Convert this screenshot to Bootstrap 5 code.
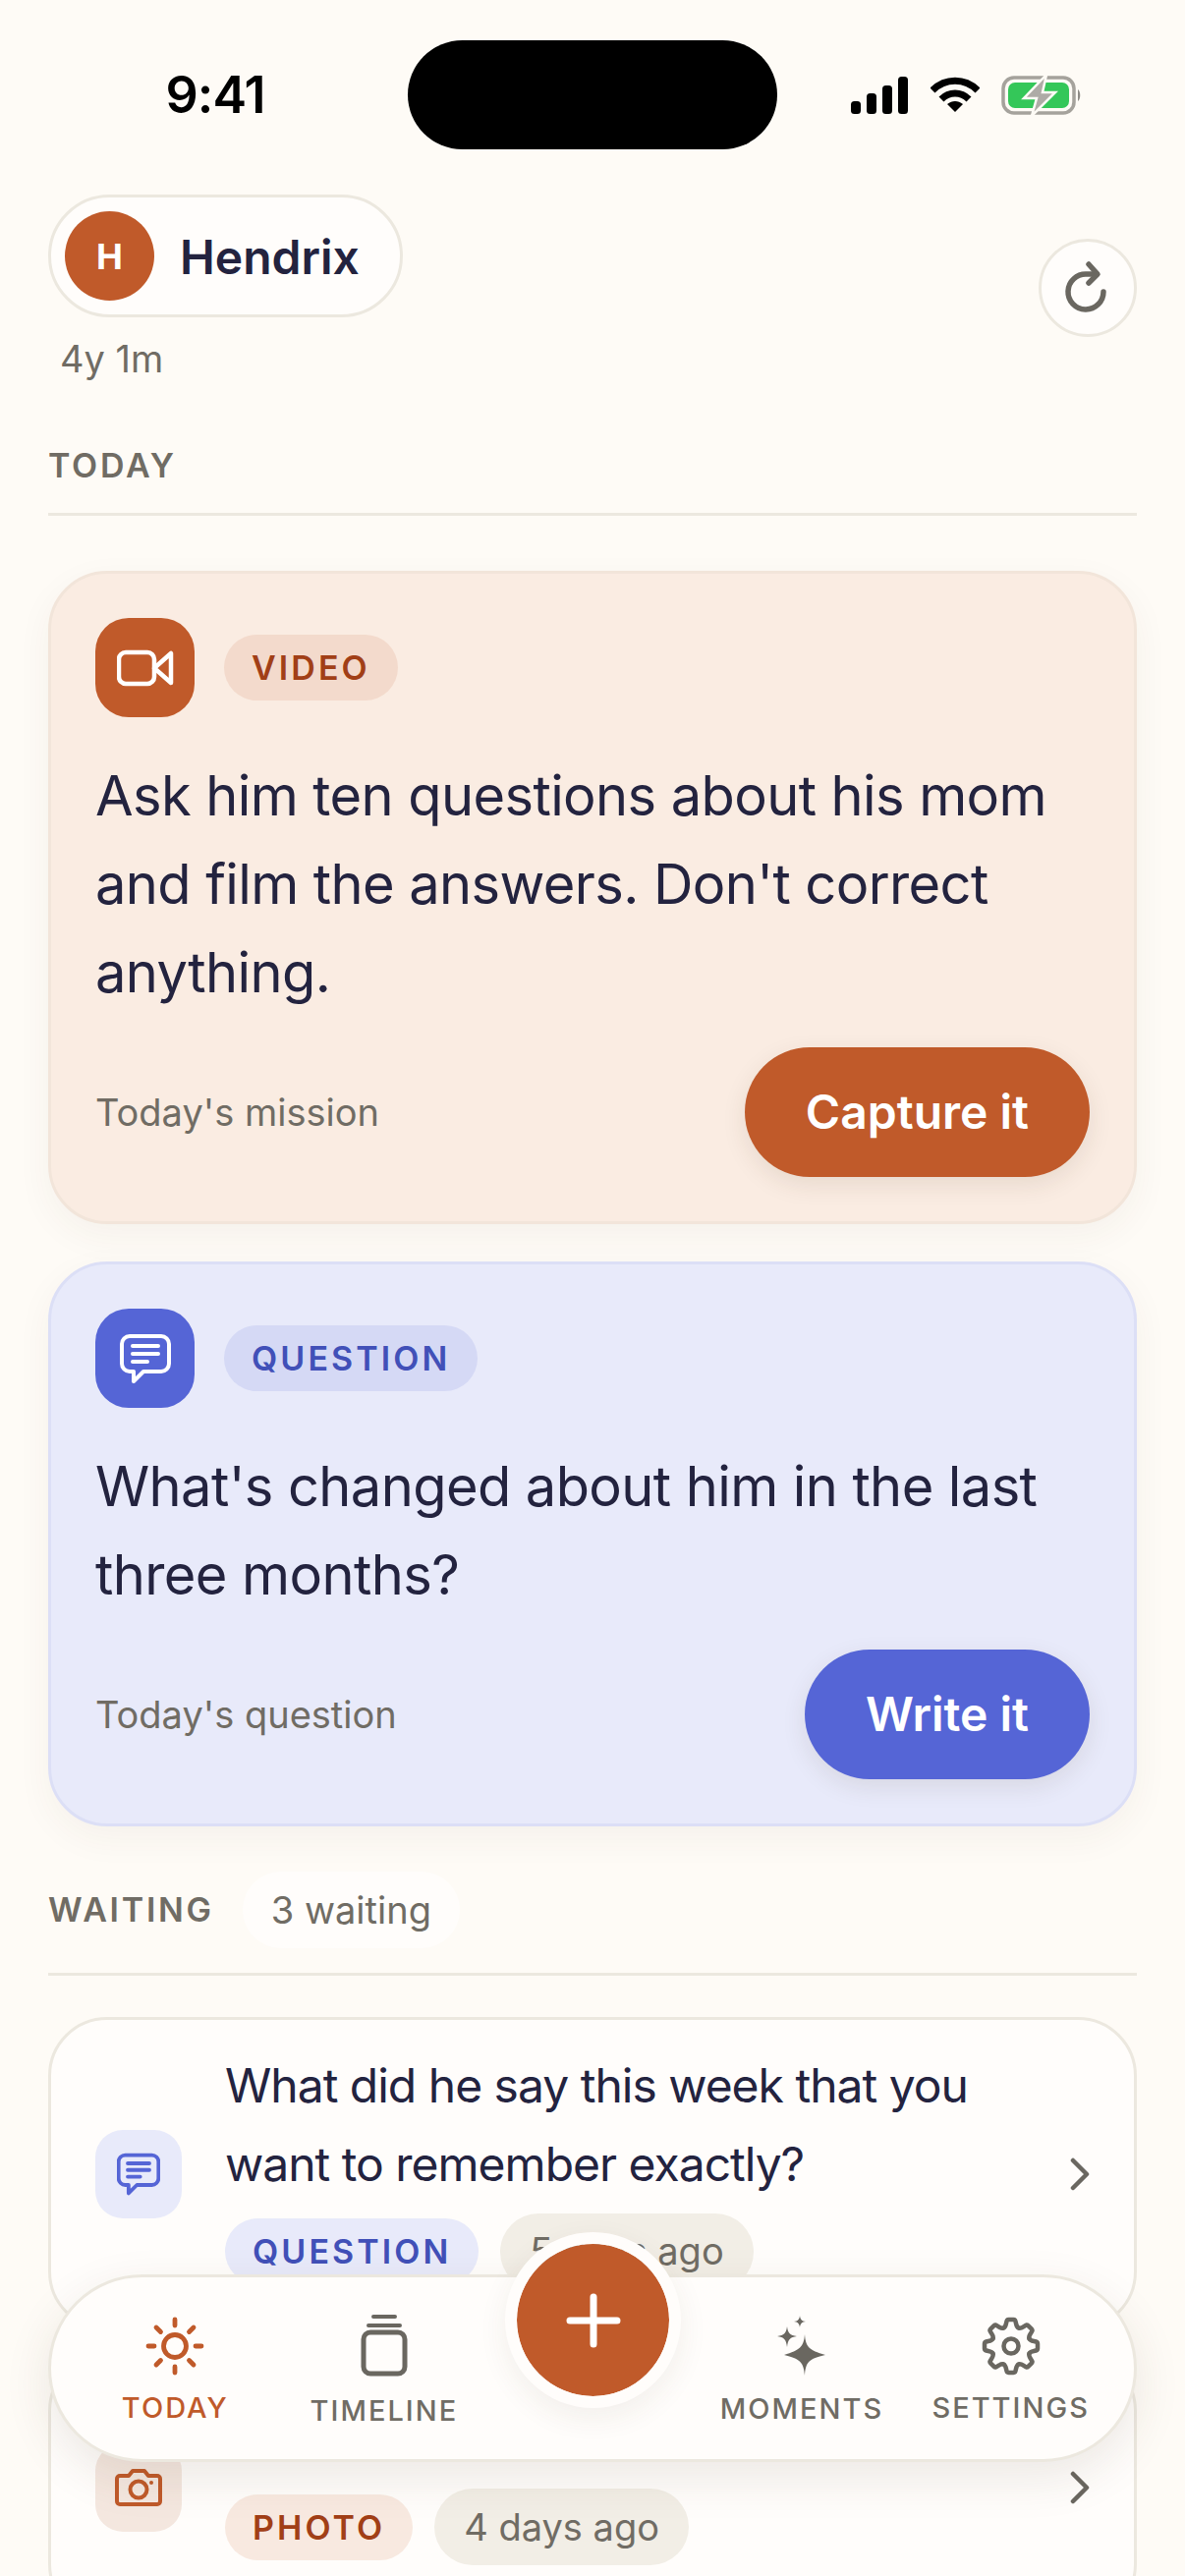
<!DOCTYPE html>
<html lang="en">
<head>
    <meta charset="UTF-8">
    <title>Hendrix - Today</title>
    <link href="https://cdn.jsdelivr.net/npm/bootstrap@5.3.0/dist/css/bootstrap.min.css" rel="stylesheet">
    <style>
        html, body {
            margin: 0;
            height: 2622px;
            overflow: hidden;
            background: #fefbf6;
        }

        body {
            font-family: Inter, "Liberation Sans", sans-serif;
            color: #23233f;
        }

        .phone {
            position: relative;
            width: 1206px;
            height: 2622px;
            overflow: hidden;
        }

        /* Status bar */
        .status-bar {
            height: 111px;
            margin-top: 41px;
        }

        .status-time {
            width: 415px;
            padding-left: 23px;
            text-align: center;
            font-size: 52px;
            font-weight: 600;
            color: #000;
            line-height: 1;
            letter-spacing: -1px;
        }

        .status-island {
            width: 376px;
            height: 111px;
            background: #000;
            border-radius: 56px;
        }

        .status-icons {
            gap: 22px;
            margin-left: 74px;
        }

        .page-body {
            padding: 0 49px;
        }

        /* Header */
        .top-row {
            margin-top: 46px;
        }

        .child-chip {
            height: 125px;
            width: 361px;
            padding-left: 14px;
            gap: 26px;
            background: #fffdfb;
            border: 3px solid #ece8df;
            font-size: 48px;
            font-weight: 600;
            line-height: 1;
        }

        .child-name {
            padding-top: 3px;
        }

        .child-avatar {
            width: 91px;
            height: 91px;
            background: #c05a2a;
            color: #fff;
            font-size: 36px;
            font-weight: 700;
        }

        .child-age {
            font-size: 38px;
            line-height: 44px;
            color: #706c64;
            margin: 20px 0 0 12px;
        }

        .refresh-btn {
            width: 100px;
            height: 100px;
            padding: 0;
            margin-top: 45px;
            background: #fffdfb;
            border: 3px solid #ece8df;
        }

        /* Section headings */
        .section-head {
            gap: 29px;
            border-bottom: 3px solid #ece8df;
            font-size: 34px;
            font-weight: 600;
            letter-spacing: 0.08em;
            color: #706c64;
            padding-bottom: 28px;
        }

        .section-today {
            margin-top: 67px;
            line-height: 40px;
        }

        .section-waiting {
            margin-top: 46px;
            line-height: 78px;
            padding-bottom: 25px;
        }

        .waiting-pill {
            background: #fffdfb;
            padding: 0 29px;
            height: 78px;
            font-size: 38px;
            font-weight: 400;
            letter-spacing: 0;
        }

        /* Big prompt cards */
        .prompt-card {
            border-width: 3px;
            border-style: solid;
            border-radius: 60px;
            padding: 45px;
            box-shadow: 0 12px 36px rgba(70, 50, 30, 0.05);
        }

        .prompt-video {
            background: #faece2;
            border-color: #f2e5da;
            margin-top: 56px;
        }

        .prompt-question {
            background: #e8eafa;
            border-color: #dcdff6;
            margin-top: 38px;
        }

        .prompt-head {
            gap: 30px;
        }

        .kind-tile {
            width: 101px;
            height: 101px;
            border-radius: 34px;
        }

        .tile-video { background: #c05a2a; }
        .tile-question { background: #5565d6; }

        .kind-tag {
            height: 67px;
            padding: 0 28px;
            font-size: 34px;
            font-weight: 600;
            letter-spacing: 0.09em;
        }

        .tag-video { background: #f3dacc; color: #a13f17; }
        .tag-question { background: #d5d9f5; color: #4150b8; }
        .tag-question-soft { background: #e8eafa; color: #4150b8; }
        .tag-photo { background: #f8e9e0; color: #a13f17; }
        .tag-time {
            background: #f2eee6;
            color: #706c64;
            font-weight: 400;
            letter-spacing: 0;
            font-size: 38px;
            height: 78px;
            padding: 0 30px;
        }

        .prompt-text {
            font-size: 56px;
            line-height: 90px;
            letter-spacing: -0.6px;
            margin: 35px 0 31px;
        }

        .prompt-note {
            font-size: 38px;
            color: #706c64;
        }

        .action-btn {
            height: 132px;
            padding: 0 62px;
            border: 0;
            font-size: 48px;
            font-weight: 600;
            color: #fff;
            box-shadow: 0 8px 24px rgba(70, 50, 30, 0.1);
        }

        .action-video, .action-video:hover { background: #c05a2a; color: #fff; }
        .action-question, .action-question:hover { background: #5565d6; color: #fff; }

        /* Waiting list */
        .waiting-item {
            background: #fffdfb;
            border: 3px solid #ece8df;
            border-radius: 60px;
            padding: 25px 45px;
            gap: 44px;
        }

        .waiting-first { margin-top: 42px; min-height: 319px; }
        .waiting-second { margin-top: 22px; min-height: 276px; }

        .item-tile {
            width: 88px;
            height: 90px;
            border-radius: 28px;
        }

        .item-tile-question { background: #e8eafa; }
        .item-tile-photo { background: #f4e7df; }

        .item-body-first { padding-bottom: 12px; }
        .item-body-second { padding-bottom: 10px; }

        .item-text {
            font-size: 48px;
            line-height: 80px;
            letter-spacing: -1px;
        }

        /* its line is hidden behind the bottom nav in the picture */
        .item-text-covered {
            height: 80px;
        }

        .item-tags {
            gap: 22px;
            margin-top: 10px;
        }

        /* Bottom navigation */
        .bottom-nav {
            position: absolute;
            left: 49px;
            top: 2315px;
            width: 1108px;
            height: 191px;
            padding: 2px 20px 0;
            background: #fffdfb;
            border: 3px solid #ece8df;
            border-radius: 96px;
            box-shadow: 0 16px 48px rgba(70, 50, 30, 0.1);
        }

        .nav-slot {
            flex: 0 0 212.6px;
            gap: 18px;
            font-size: 29px;
            font-weight: 500;
            letter-spacing: 0.07em;
            color: #706c64;
            line-height: 1;
        }

        .nav-slot-active {
            color: #c05a2a;
        }

        .add-btn {
            position: absolute;
            left: 514px;
            top: 2272px;
            width: 179px;
            height: 179px;
            padding: 0;
            background: #c05a2a;
            border: 12px solid #fffdfb;
            background-clip: padding-box;
            box-shadow: 0 10px 30px rgba(70, 50, 30, 0.07);
        }

        .add-btn:hover { background: #c05a2a; background-clip: padding-box; }
    </style>
</head>
<body>
<div class="phone">

    <!-- Status bar -->
    <div class="status-bar d-flex align-items-center">
        <div class="status-time">9:41</div>
        <div class="status-island"></div>
        <div class="status-icons d-flex align-items-center">
            <svg width="60" height="38" viewBox="0 0 60 38" fill="#000">
                <rect x="1" y="25" width="10" height="13" rx="3.5"/>
                <rect x="17" y="17" width="10" height="21" rx="3.5"/>
                <rect x="33" y="9" width="10" height="29" rx="3.5"/>
                <rect x="49" y="0" width="10" height="38" rx="3.5"/>
            </svg>
            <svg width="50" height="38" viewBox="0 0 50 38" fill="none" stroke="#000" stroke-width="7">
                <path d="M2 14 C15 1 35 1 48 14"/>
                <path d="M11 23 C19 15 31 15 39 23"/>
                <path d="M17 28 L25 36 L33 28 C28 24 22 24 17 28 Z" fill="#000" stroke="none"/>
            </svg>
            <svg width="82" height="42" viewBox="0 0 82 42" fill="none">
                <rect x="2" y="3" width="72" height="36" rx="11" stroke="#a5a29c" stroke-width="3.5"/>
                <rect x="7" y="8" width="62" height="26" rx="7" fill="#34c759"/>
                <path d="M78 15 C81 17 81 25 78 27 Z" fill="#8d8a85"/>
                <path d="M46 0 L23 24 H36 L31 42 L55 18 H42 Z" fill="#aeaba6" stroke="#fefbf6" stroke-width="2.5"/>
            </svg>
        </div>
    </div>

    <div class="page-body">

        <!-- Child header -->
        <div class="top-row d-flex justify-content-between align-items-start">
            <div>
                <div class="child-chip d-flex align-items-center rounded-pill">
                    <span class="child-avatar rounded-circle d-flex align-items-center justify-content-center">H</span>
                    <span class="child-name">Hendrix</span>
                </div>
                <div class="child-age">4y 1m</div>
            </div>
            <button class="refresh-btn btn rounded-circle d-flex align-items-center justify-content-center" type="button">
                <svg width="50" height="56" viewBox="0 0 50 56" fill="none" stroke="#6a6760" stroke-width="5.5" stroke-linecap="round" stroke-linejoin="round">
                    <path d="M41 32 A18 18 0 1 1 24 14 H32"/>
                    <path d="M26 4 L35 14 L26 23"/>
                </svg>
            </button>
        </div>

        <!-- Today -->
        <div class="section-head section-today d-flex">TODAY</div>

        <div class="prompt-card prompt-video">
            <div class="prompt-head d-flex align-items-center">
                <span class="kind-tile tile-video d-flex align-items-center justify-content-center">
                    <svg width="58" height="38" viewBox="0 0 58 38" fill="none" stroke="#fff" stroke-width="4.5" stroke-linejoin="round">
                        <rect x="2" y="3" width="36" height="32" rx="7"/>
                        <path d="M38 19 L55 4 V34 Z"/>
                    </svg>
                </span>
                <span class="kind-tag tag-video rounded-pill d-inline-flex align-items-center">VIDEO</span>
            </div>
            <p class="prompt-text">Ask him ten questions about his mom and film the answers. Don't correct anything.</p>
            <div class="d-flex justify-content-between align-items-center">
                <span class="prompt-note">Today's mission</span>
                <button class="action-btn action-video btn rounded-pill" type="button">Capture it</button>
            </div>
        </div>

        <div class="prompt-card prompt-question">
            <div class="prompt-head d-flex align-items-center">
                <span class="kind-tile tile-question d-flex align-items-center justify-content-center">
                    <svg width="52" height="50" viewBox="0 0 52 50" fill="none" stroke="#fff" stroke-width="4" stroke-linecap="round" stroke-linejoin="round">
                        <path d="M10 2 H42 A8 8 0 0 1 50 10 V30 A8 8 0 0 1 42 38 H24 L14 48 V38 H10 A8 8 0 0 1 2 30 V10 A8 8 0 0 1 10 2 Z"/>
                        <path d="M13 12 H39 M13 20 H39 M13 28 H28"/>
                    </svg>
                </span>
                <span class="kind-tag tag-question rounded-pill d-inline-flex align-items-center">QUESTION</span>
            </div>
            <p class="prompt-text">What's changed about him in the last three months?</p>
            <div class="d-flex justify-content-between align-items-center">
                <span class="prompt-note">Today's question</span>
                <button class="action-btn action-question btn rounded-pill" type="button">Write it</button>
            </div>
        </div>

        <!-- Waiting -->
        <div class="section-head section-waiting d-flex align-items-center">
            <span>WAITING</span>
            <span class="waiting-pill rounded-pill d-inline-flex align-items-center">3 waiting</span>
        </div>

        <div class="waiting-item waiting-first d-flex align-items-center">
            <span class="item-tile item-tile-question flex-shrink-0 d-flex align-items-center justify-content-center">
                <svg width="44" height="44" viewBox="0 0 52 50" fill="none" stroke="#5565d6" stroke-width="4.5" stroke-linecap="round" stroke-linejoin="round">
                    <path d="M10 2 H42 A8 8 0 0 1 50 10 V30 A8 8 0 0 1 42 38 H24 L14 48 V38 H10 A8 8 0 0 1 2 30 V10 A8 8 0 0 1 10 2 Z"/>
                    <path d="M13 12 H39 M13 20 H39 M13 28 H28"/>
                </svg>
            </span>
            <div class="item-body-first flex-grow-1">
                <div class="item-text">What did he say this week that you want to remember exactly?</div>
                <div class="item-tags d-flex align-items-center">
                    <span class="kind-tag tag-question-soft rounded-pill d-inline-flex align-items-center">QUESTION</span>
                    <span class="kind-tag tag-time rounded-pill d-inline-flex align-items-center">5 days ago</span>
                </div>
            </div>
            <svg class="flex-shrink-0" width="20" height="34" viewBox="0 0 20 34" fill="none" stroke="#6a6760" stroke-width="4.5" stroke-linecap="round" stroke-linejoin="round">
                <path d="M3 3 L17 17 L3 31"/>
            </svg>
        </div>

        <div class="waiting-item waiting-second d-flex align-items-center">
            <span class="item-tile item-tile-photo flex-shrink-0 d-flex align-items-center justify-content-center">
                <svg width="48" height="38" viewBox="0 0 48 38" fill="none" stroke="#c05a2a" stroke-width="4" stroke-linejoin="round">
                    <path d="M5 7 H14 L18 2 H30 L34 7 H43 A3 3 0 0 1 46 10 V33 A3 3 0 0 1 43 36 H5 A3 3 0 0 1 2 33 V10 A3 3 0 0 1 5 7 Z"/>
                    <circle cx="24" cy="21" r="8.5"/>
                    <circle cx="37" cy="14" r="2" fill="#c05a2a" stroke="none"/>
                </svg>
            </span>
            <div class="item-body-second flex-grow-1">
                <div class="item-text-covered"></div>
                <div class="item-tags d-flex align-items-center">
                    <span class="kind-tag tag-photo rounded-pill d-inline-flex align-items-center">PHOTO</span>
                    <span class="kind-tag tag-time rounded-pill d-inline-flex align-items-center">4 days ago</span>
                </div>
            </div>
            <svg class="flex-shrink-0" width="20" height="34" viewBox="0 0 20 34" fill="none" stroke="#6a6760" stroke-width="4.5" stroke-linecap="round" stroke-linejoin="round">
                <path d="M3 3 L17 17 L3 31"/>
            </svg>
        </div>
    </div>

    <!-- Bottom navigation -->
    <nav class="bottom-nav d-flex align-items-center">
        <div class="nav-slot nav-slot-active d-flex flex-column align-items-center">
            <svg width="60" height="60" viewBox="0 0 60 60" fill="none" stroke="#c05a2a" stroke-width="4.8" stroke-linecap="round">
                <circle cx="30" cy="30" r="11.5"/>
                <path d="M30 3 V9 M30 51 V57 M3 30 H9 M51 30 H57 M11 11 L15.5 15.5 M44.5 44.5 L49 49 M11 49 L15.5 44.5 M44.5 15.5 L49 11"/>
            </svg>
            <span>TODAY</span>
        </div>
        <div class="nav-slot d-flex flex-column align-items-center">
            <svg width="48" height="66" viewBox="0 0 48 66" fill="none" stroke="#6a6760" stroke-width="5" stroke-linecap="round" stroke-linejoin="round">
                <path d="M13 3 H35 M8 12 H40" stroke-width="4"/>
                <rect x="3" y="19" width="42" height="42" rx="7"/>
            </svg>
            <span>TIMELINE</span>
        </div>
        <div class="nav-slot"></div>
        <div class="nav-slot d-flex flex-column align-items-center">
            <svg width="52" height="62" viewBox="0 0 52 62" fill="#6a6760">
                <path d="M29 19 C30 32 33 35 50 40 C33 44 30 47 29 61 C28 47 24 44 8 40 C24 35 28 32 29 19 Z"/>
                <path d="M11 11 C12 18 14 20 21 21 C14 22 12 24 11 32 C10 24 8 22 1 21 C8 20 10 18 11 11 Z"/>
                <path d="M24 0 C24.5 4 26 5.5 30 6 C26 6.5 24.5 8 24 12 C23.5 8 22 6.5 18 6 C22 5.5 23.5 4 24 0 Z"/>
            </svg>
            <span>MOMENTS</span>
        </div>
        <div class="nav-slot d-flex flex-column align-items-center">
            <svg width="60" height="60" viewBox="0 0 60 60" fill="none" stroke="#6a6760" stroke-width="4.5" stroke-linecap="round" stroke-linejoin="round">
                <defs>
                    <path id="gear-tooth" d="M22.35 11.52 C25.3 10.3 24.6 6 26 3.5 Q26.5 3 27.5 3 H32.5 Q33.5 3 34 3.5 C35.4 6 34.7 10.3 37.65 11.52"/>
                </defs>
                <use href="#gear-tooth"/>
                <use href="#gear-tooth" transform="rotate(45 30 30)"/>
                <use href="#gear-tooth" transform="rotate(90 30 30)"/>
                <use href="#gear-tooth" transform="rotate(135 30 30)"/>
                <use href="#gear-tooth" transform="rotate(180 30 30)"/>
                <use href="#gear-tooth" transform="rotate(225 30 30)"/>
                <use href="#gear-tooth" transform="rotate(270 30 30)"/>
                <use href="#gear-tooth" transform="rotate(315 30 30)"/>
                <circle cx="30" cy="30" r="7.5"/>
            </svg>
            <span>SETTINGS</span>
        </div>
    </nav>

    <button class="add-btn btn rounded-circle d-flex align-items-center justify-content-center" type="button">
        <svg width="56" height="56" viewBox="0 0 56 56" fill="none" stroke="#fff" stroke-width="7" stroke-linecap="round">
            <path d="M28 4 V52 M4 28 H52"/>
        </svg>
    </button>

</div>
<script src="https://cdn.jsdelivr.net/npm/bootstrap@5.3.0/dist/js/bootstrap.bundle.min.js"></script>
</body>
</html>
